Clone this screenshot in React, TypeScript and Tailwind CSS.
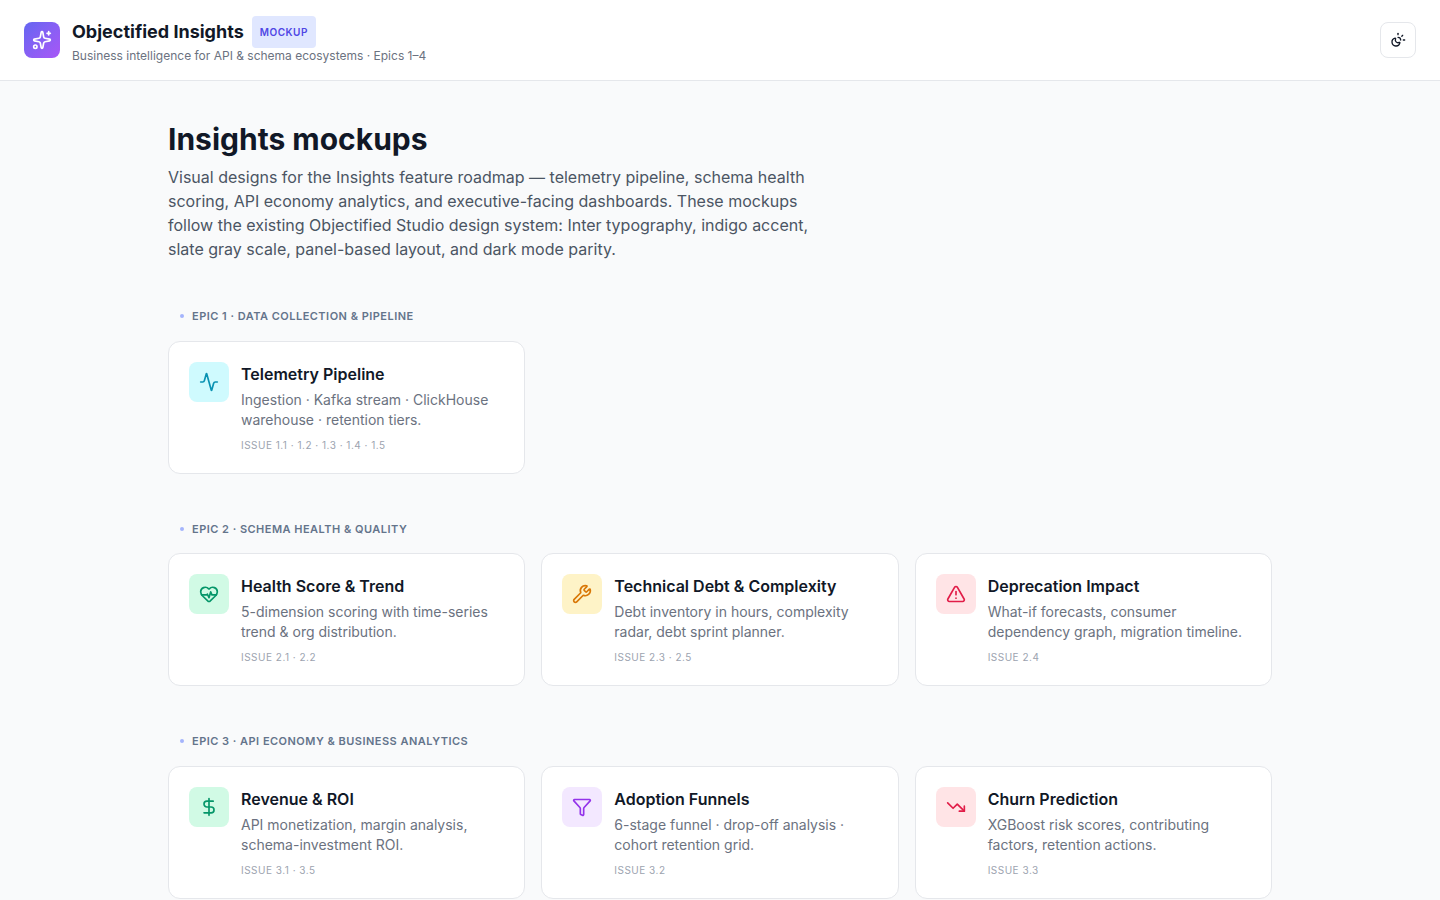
import React from 'react';
import {
  Activity,
  DollarSign,
  Funnel,
  HeartPulse,
  Sparkles,
  SunMoon,
  TrendingDown,
  TriangleAlert,
  Wrench,
} from 'lucide-react';

const epics = [
  {
    label: 'Epic 1 · Data Collection & Pipeline',
    cards: [
      {
        title: 'Telemetry Pipeline',
        desc: 'Ingestion · Kafka stream · ClickHouse warehouse · retention tiers.',
        issue: 'Issue 1.1 · 1.2 · 1.3 · 1.4 · 1.5',
        icon: Activity,
        tone: 'bg-[#cffafe] text-[#0891b2]',
      },
    ],
  },
  {
    label: 'Epic 2 · Schema Health & Quality',
    cards: [
      {
        title: 'Health Score & Trend',
        desc: '5-dimension scoring with time-series trend & org distribution.',
        issue: 'Issue 2.1 · 2.2',
        icon: HeartPulse,
        tone: 'bg-[#d1fae5] text-[#059669]',
      },
      {
        title: 'Technical Debt & Complexity',
        desc: 'Debt inventory in hours, complexity radar, debt sprint planner.',
        issue: 'Issue 2.3 · 2.5',
        icon: Wrench,
        tone: 'bg-[#fef3c7] text-[#d97706]',
      },
      {
        title: 'Deprecation Impact',
        desc: 'What-if forecasts, consumer dependency graph, migration timeline.',
        issue: 'Issue 2.4',
        icon: TriangleAlert,
        tone: 'bg-[#ffe4e6] text-[#e11d48]',
      },
    ],
  },
  {
    label: 'Epic 3 · API Economy & Business Analytics',
    cards: [
      {
        title: 'Revenue & ROI',
        desc: 'API monetization, margin analysis, schema-investment ROI.',
        issue: 'Issue 3.1 · 3.5',
        icon: DollarSign,
        tone: 'bg-[#d1fae5] text-[#059669]',
      },
      {
        title: 'Adoption Funnels',
        desc: '6-stage funnel · drop-off analysis · cohort retention grid.',
        issue: 'Issue 3.2',
        icon: Funnel,
        tone: 'bg-[#f3e8ff] text-[#9333ea]',
      },
      {
        title: 'Churn Prediction',
        desc: 'XGBoost risk scores, contributing factors, retention actions.',
        issue: 'Issue 3.3',
        icon: TrendingDown,
        tone: 'bg-[#ffe4e6] text-[#e11d48]',
      },
    ],
  },
];

export default function App() {
  return (
    <div className="min-h-screen bg-[#f9fafb] font-['Inter',sans-serif] text-[#111827]">
      {/* Header */}
      <header className="flex h-[81px] items-center justify-between border-b border-[#e5e7eb] bg-white px-6">
        <div className="flex items-center gap-3">
          <span className="flex h-9 w-9 items-center justify-center rounded-lg bg-gradient-to-br from-[#6366f1] to-[#a855f7] text-white">
            <Sparkles className="h-5 w-5" />
          </span>
          <div>
            <div className="flex items-center gap-2">
              <h1 className="text-lg leading-7 font-bold">Objectified Insights</h1>
              <span className="rounded bg-[#e0e7ff] px-2 py-2 text-[10px] leading-4 font-semibold tracking-wider text-[#4f46e5] uppercase">
                Mockup
              </span>
            </div>
            <p className="text-xs leading-4 text-[#6b7280]">Business intelligence for API &amp; schema ecosystems · Epics 1–4</p>
          </div>
        </div>
        <button className="flex h-9 w-9 items-center justify-center rounded-lg border border-[#e5e7eb] bg-white text-[#111827]">
          <SunMoon className="h-4 w-4" />
        </button>
      </header>

      <main className="mx-auto w-[1104px] pt-10">
        <h2 className="text-3xl leading-9 font-bold">Insights mockups</h2>
        <p className="mt-2 max-w-[660px] text-base leading-6 text-[#4b5563]">
          Visual designs for the Insights feature roadmap — telemetry pipeline, schema health scoring, API economy analytics, and executive-facing dashboards. These mockups follow the existing Objectified Studio design system: Inter typography, indigo accent, slate gray scale, panel-based layout, and dark mode parity.
        </p>

        {epics.map((epic) => (
          <section key={epic.label} className="mt-[47px]">
            <div className="mb-[16.8px] flex items-center gap-2 pl-3 text-[11px] leading-4 font-semibold tracking-[0.48px] text-[#64748b] uppercase">
              <span className="h-1 w-1 rounded-full bg-[#a5b4fc]" />
              <span>{epic.label}</span>
            </div>
            <div className="grid grid-cols-3 gap-4">
              {epic.cards.map((card) => (
                <div key={card.title} className="flex gap-3 rounded-xl border border-[#e5e7eb] bg-white p-5">
                  <span className={`flex h-10 w-10 shrink-0 items-center justify-center rounded-lg ${card.tone}`}>
                    <card.icon className="h-5 w-5" />
                  </span>
                  <div>
                    <h3 className="text-base leading-6 font-semibold">{card.title}</h3>
                    <p className="mt-1 text-sm leading-5 text-[#6b7280]">{card.desc}</p>
                    <p className="mt-2 text-[10px] leading-[14.8px] tracking-wider text-[#9ca3af] uppercase">{card.issue}</p>
                  </div>
                </div>
              ))}
            </div>
          </section>
        ))}
      </main>
    </div>
  );
}
